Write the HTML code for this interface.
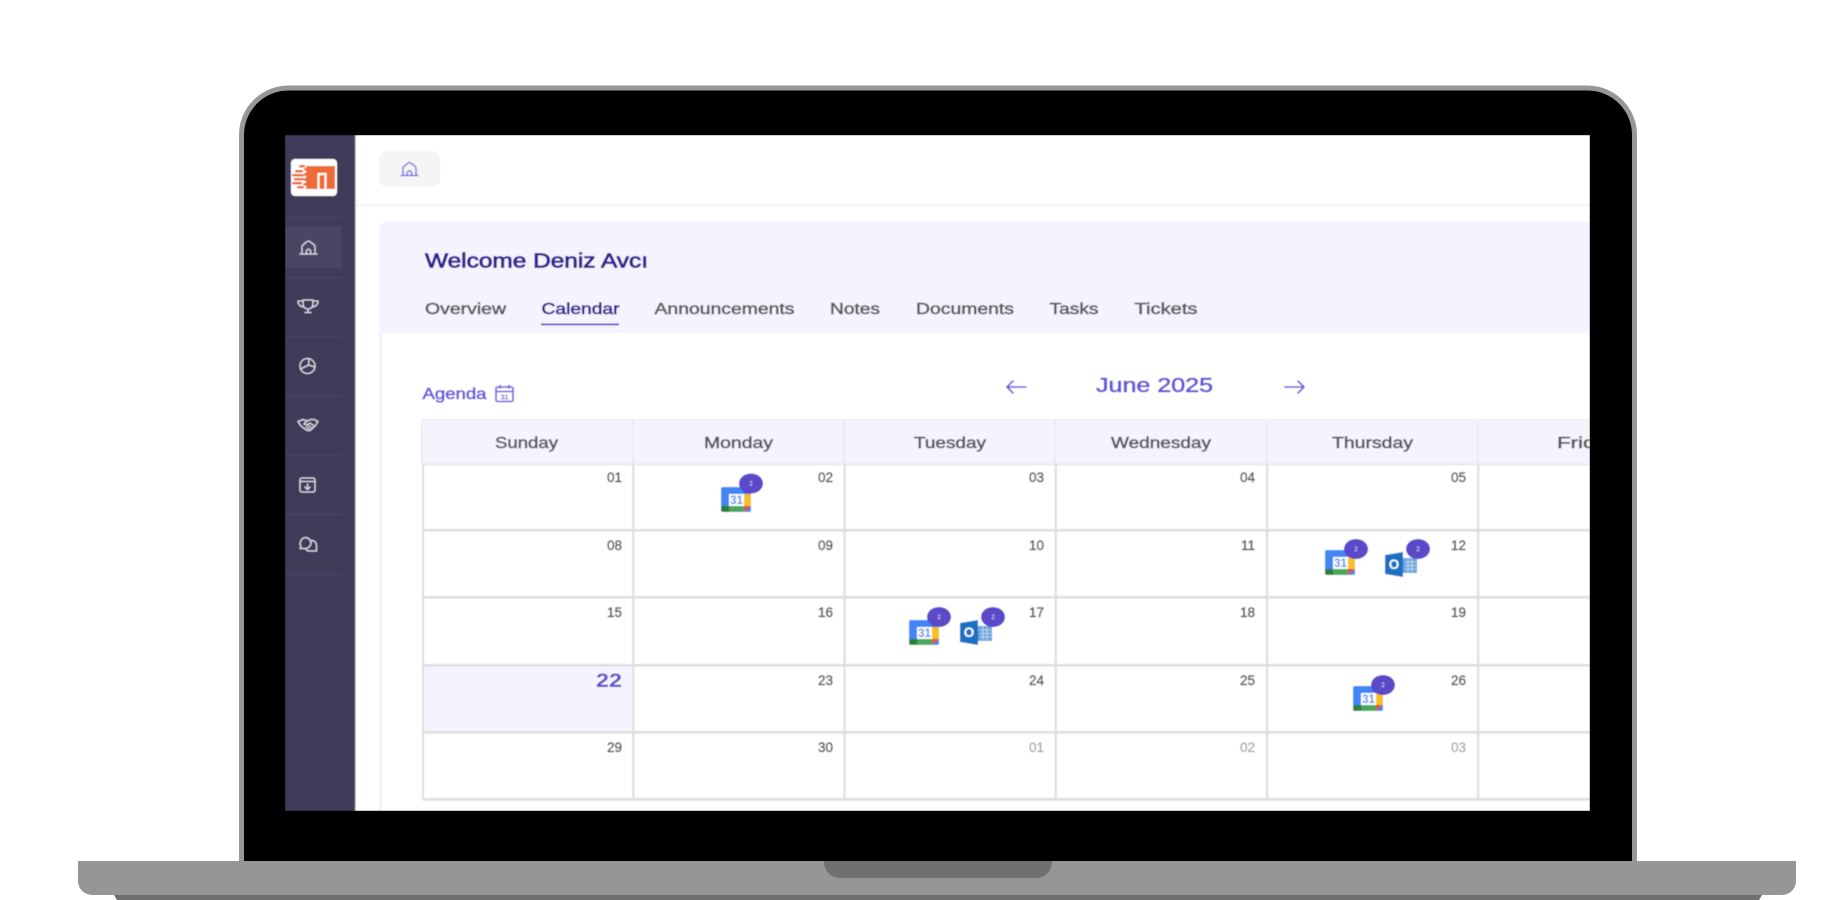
<!DOCTYPE html>
<html lang="en">
<head>
<meta charset="utf-8">
<title>Calendar</title>
<style>
html,body{margin:0;padding:0;background:#fff;width:1840px;height:900px;overflow:hidden}
svg{display:block}
text{font-family:"Liberation Sans",sans-serif}
</style>
</head>
<body>
<svg width="1840" height="900" viewBox="0 0 1840 900" xmlns="http://www.w3.org/2000/svg">
<defs>
<clipPath id="scr"><rect x="285" y="135" width="1305" height="676"/></clipPath>
<filter id="b" x="0" y="0" width="100%" height="100%"><feGaussianBlur stdDeviation="0.6"/></filter>
<g id="gc">
<rect x="0" y="0" width="30" height="25" rx="2" fill="#4285f4"/>
<rect x="23" y="0" width="7" height="7" fill="#2f73dc"/>
<rect x="23" y="7" width="7" height="12" fill="#f6bf26"/>
<rect x="8" y="19" width="15" height="6" fill="#4aa85e"/>
<path d="M0 19H8V25H2A2 2 0 0 1 0 23Z" fill="#2a7f3e"/>
<path d="M23 19H30L23 25Z" fill="#e2553f"/>
<rect x="8" y="7" width="15" height="12" fill="#fff"/>
</g>
<g id="ol">
<rect x="18" y="6" width="14" height="15" fill="#6ba4dc"/>
<path d="M20 10H31M20 13.5H31M20 17H31M23 7V20M27 7V20" stroke="#cfe2f4" stroke-width="0.8" fill="none"/>
<path d="M0 3L18 0V25L0 22Z" fill="#1f70c1"/>
</g>
</defs>

<!-- laptop -->
<path d="M241.5 870V135A47 47 0 0 1 288.5 88H1587.5A47 47 0 0 1 1634.5 135V870Z" fill="#000" stroke="#979797" stroke-width="5"/>
<rect x="0" y="861" width="1840" height="39" fill="#fff"/>
<path d="M78 861H1796V881A14 14 0 0 1 1782 895H92A14 14 0 0 1 78 881Z" fill="#969696"/>
<path d="M114 895H1762L1759 900H117Z" fill="#6f6f6f"/>
<path d="M824 861H1052V862A16 16 0 0 1 1036 878H840A16 16 0 0 1 824 862Z" fill="#707070"/>

<g clip-path="url(#scr)">
<g filter="url(#b)">
<rect x="285" y="135" width="1305" height="676" fill="#fff"/>

<!-- sidebar -->
<rect x="285" y="135" width="70" height="676" fill="#403a59"/>
<rect x="355" y="135" width="1" height="676" fill="#c9c8d2"/>
<rect x="291" y="159" width="46" height="37" rx="4" fill="#fff"/>
<rect x="306" y="166" width="29" height="23" fill="#ee6b39"/>
<path d="M318.5 189V174H325.5V189" fill="#ee6b39" stroke="#fff" stroke-width="2.2"/>
<g fill="#ee6b39">
<rect x="299" y="165" width="6" height="2.5" rx="1"/><rect x="304" y="168" width="6" height="2.5" rx="1"/>
<rect x="295" y="170" width="8" height="2.5" rx="1"/><rect x="292" y="174" width="12" height="2.5" rx="1"/>
<rect x="304" y="173" width="6" height="3" rx="1"/><rect x="294" y="178" width="10" height="2.5" rx="1"/>
<rect x="304" y="178" width="6" height="3" rx="1"/><rect x="292" y="182" width="10" height="2.5" rx="1"/>
<rect x="303" y="183" width="6" height="2.5" rx="1"/><rect x="297" y="186" width="7" height="2.5" rx="1"/>
</g>
<rect x="285" y="226" width="57" height="42" fill="#4a4463"/>
<g fill="#4d4672">
<rect x="285" y="217" width="57" height="1"/><rect x="285" y="277" width="57" height="1"/>
<rect x="285" y="336" width="57" height="1"/><rect x="285" y="395" width="57" height="1"/>
<rect x="285" y="455" width="57" height="1"/><rect x="285" y="514" width="57" height="1"/>
<rect x="285" y="574" width="57" height="1"/>
</g>
<g fill="none" stroke="#dddbe6" stroke-width="1.3" stroke-linecap="round" stroke-linejoin="round">
<g transform="translate(308.5 247.5)"><path d="M-8.5 6.5H8.5M-6.5 6.5V-1.5C-6.5 -2 -1 -6.5 0 -6.5C1 -6.5 6.5 -2 6.5 -1.5V6.5M-2.2 6.5V4A2.2 2.2 0 0 1 2.2 4V6.5"/></g>
<g transform="translate(308 306)"><path d="M-5 -6H5V-2A5 5 0 0 1 -5 -2ZM-5 -5H-10C-10 -1 -7 1 -4 1M5 -5H10C10 -1 7 1 4 1M0 3V6M-3 6.5H3"/></g>
<g transform="translate(307.5 366)"><circle r="7.5"/><path d="M-7 3L1 -1L1.5 -7.3M1 -1L7.3 1"/></g>
<g transform="translate(308 425)"><path d="M-10 -3.5L-5 -5.5L-1 -4L3 -5.5L6 -5.5L10 -3.5L7 1L2 5.5L-1 5.5L-7 1ZM-1 -4L-4 -1L-1 0L2 -2L6 1M-7 1L-3 4M-5 2.5L-1 5.5M-2 2L1.5 4.5M0 0.5L4 3"/></g>
<g transform="translate(307.5 485)"><rect x="-7.5" y="-7" width="15" height="14" rx="2"/><path d="M-7.5 -3.5H7.5M0 -1V4M-2.5 2L0 4.5L2.5 2"/></g>
<g transform="translate(308.5 544)"><path d="M-3 -6.5A5.8 5.8 0 0 1 2.5 -1.2A5.8 5.8 0 0 1 -3 4.5H-8.5L-7.5 2.5A6 6 0 0 1 -3 -6.5Z"/><path d="M3 -3.5A5 5 0 0 1 8 1.5V7H0A4.5 4.5 0 0 1 -3 4.5"/></g>
</g>

<!-- top bar -->
<rect x="379" y="151" width="61" height="36" rx="8" fill="#f5f5f5"/>
<g transform="translate(409.5 169)" fill="none" stroke="#6c60e0" stroke-width="1.3" stroke-linecap="round" stroke-linejoin="round"><path d="M-8.5 6.5H8.5M-6.5 6.5V-1.5C-6.5 -2 -1 -6.5 0 -6.5C1 -6.5 6.5 -2 6.5 -1.5V6.5M-2.2 6.5V4A2.2 2.2 0 0 1 2.2 4V6.5"/></g>
<rect x="356" y="204.5" width="1234" height="1.5" fill="#f0f0f0"/>

<!-- welcome panel -->
<path d="M387 221.5H1590V333H379V229.5A8 8 0 0 1 387 221.5Z" fill="#f5f3fd"/>
<rect x="379.5" y="333" width="2" height="478" fill="#eeeeef"/>
<text x="425" y="267.5" font-size="20.5" fill="#2f2490" stroke="#2f2490" stroke-width="0.85" textLength="223" lengthAdjust="spacingAndGlyphs">Welcome Deniz Avcı</text>
<g font-size="16" fill="#5a5a5e" stroke="#5a5a5e" stroke-width="0.55">
<text x="425" y="314" textLength="81" lengthAdjust="spacingAndGlyphs">Overview</text>
<text x="654.5" y="314" textLength="140" lengthAdjust="spacingAndGlyphs">Announcements</text>
<text x="830" y="314" textLength="50" lengthAdjust="spacingAndGlyphs">Notes</text>
<text x="916" y="314" textLength="98" lengthAdjust="spacingAndGlyphs">Documents</text>
<text x="1049.5" y="314" textLength="49" lengthAdjust="spacingAndGlyphs">Tasks</text>
<text x="1134.5" y="314" textLength="63" lengthAdjust="spacingAndGlyphs">Tickets</text>
</g>
<text x="541.5" y="314" font-size="16" fill="#2f2490" stroke="#2f2490" stroke-width="0.6" textLength="78" lengthAdjust="spacingAndGlyphs">Calendar</text>
<rect x="541" y="323.5" width="78" height="1.8" fill="#5b4fc9"/>

<!-- agenda + month nav -->
<text x="422.5" y="399" font-size="16" fill="#6659dc" stroke="#6659dc" stroke-width="0.6" textLength="64" lengthAdjust="spacingAndGlyphs">Agenda</text>
<g fill="none" stroke="#6659dc" stroke-width="1.6" stroke-linecap="round">
<rect x="496" y="387" width="17" height="14.5" rx="1.5"/><path d="M496 391.5H513M500 385.5V388M509 385.5V388"/>
</g>
<text x="504.5" y="399.5" font-size="7" font-weight="bold" text-anchor="middle" fill="#6659dc">31</text>
<text x="1096" y="392" font-size="20" fill="#6154d8" stroke="#6154d8" stroke-width="0.6" textLength="117" lengthAdjust="spacingAndGlyphs">June 2025</text>
<g fill="none" stroke="#6154d8" stroke-width="1.6" stroke-linecap="round" stroke-linejoin="round">
<path d="M1007 387H1026M1013 381L1007 387L1013 393"/>
<path d="M1285 387H1304M1298 381L1304 387L1298 393"/>
</g>

<!-- table header -->
<rect x="421" y="420" width="1169" height="44" fill="#f5f4fd"/>
<path d="M421 420H1590" stroke="#ecebf4" stroke-width="1.5"/>
<g fill="#e9e8f2">
<rect x="421" y="420" width="1.5" height="44"/><rect x="632" y="420" width="1.6" height="44"/>
<rect x="843.5" y="420" width="1.6" height="44"/><rect x="1054.5" y="420" width="1.6" height="44"/>
<rect x="1266" y="420" width="1.6" height="44"/><rect x="1477" y="420" width="1.6" height="44"/>
</g>
<g font-size="15.5" fill="#58585c" stroke="#58585c" stroke-width="0.5">
<text x="495" y="448" textLength="63" lengthAdjust="spacingAndGlyphs">Sunday</text>
<text x="704" y="448" textLength="69" lengthAdjust="spacingAndGlyphs">Monday</text>
<text x="914" y="448" textLength="72" lengthAdjust="spacingAndGlyphs">Tuesday</text>
<text x="1111" y="448" textLength="100" lengthAdjust="spacingAndGlyphs">Wednesday</text>
<text x="1332" y="448" textLength="81" lengthAdjust="spacingAndGlyphs">Thursday</text>
<text x="1557" y="448" textLength="62" lengthAdjust="spacingAndGlyphs">Friday</text>
</g>

<!-- today -->
<rect x="423" y="665" width="210" height="67" fill="#f5f4fd"/>

<!-- grid -->
<g fill="#dedede">
<rect x="422" y="463.5" width="1168" height="1.8" fill="#e6e6ea"/>
<rect x="422" y="529" width="1168" height="2.6"/><rect x="422" y="596" width="1168" height="2.6"/>
<rect x="422" y="664" width="1168" height="2.6"/><rect x="422" y="731" width="1168" height="2.6"/>
<rect x="422" y="798" width="1168" height="2.6"/>
<rect x="422" y="464" width="2" height="336"/><rect x="632.2" y="464" width="2.2" height="336"/>
<rect x="843.5" y="464" width="2.2" height="336"/><rect x="1054.7" y="464" width="2.2" height="336"/>
<rect x="1266" y="464" width="2.2" height="336"/><rect x="1477" y="464" width="2.2" height="336"/>
</g>

<!-- dates -->
<g font-size="13.5" fill="#5c5c60" stroke="#5c5c60" stroke-width="0.45" text-anchor="end">
<text x="622" y="482">01</text><text x="833" y="482">02</text><text x="1044" y="482">03</text><text x="1255" y="482">04</text><text x="1466" y="482">05</text>
<text x="622" y="549.8">08</text><text x="833" y="549.8">09</text><text x="1044" y="549.8">10</text><text x="1255" y="549.8">11</text><text x="1466" y="549.8">12</text>
<text x="622" y="616.8">15</text><text x="833" y="616.8">16</text><text x="1044" y="616.8">17</text><text x="1255" y="616.8">18</text><text x="1466" y="616.8">19</text>
<text x="833" y="684.8">23</text><text x="1044" y="684.8">24</text><text x="1255" y="684.8">25</text><text x="1466" y="684.8">26</text>
<text x="622" y="751.8">29</text><text x="833" y="751.8">30</text>
</g>
<g font-size="13.5" fill="#a8a8ac" stroke="#a8a8ac" stroke-width="0.3" text-anchor="end">
<text x="1044" y="751.8">01</text><text x="1255" y="751.8">02</text><text x="1466" y="751.8">03</text>
</g>
<text x="622" y="687" font-size="19" font-weight="bold" text-anchor="end" fill="#5b4fc9" textLength="26" lengthAdjust="spacingAndGlyphs">22</text>

<!-- google calendar icons -->
<g transform="translate(721 487)"><use href="#gc"/><text x="15.5" y="17" font-size="11.5" font-weight="bold" text-anchor="middle" fill="#5a8ff0">31</text><ellipse cx="30" cy="-3.5" rx="12" ry="10" fill="#5a49c8"/><text x="30" y="-1.5" font-size="6" text-anchor="middle" fill="#e6e3f8">2</text></g>
<g transform="translate(1325 550)"><use href="#gc"/><text x="15.5" y="17" font-size="11.5" font-weight="bold" text-anchor="middle" fill="#5a8ff0">31</text><ellipse cx="31" cy="-1" rx="12" ry="10" fill="#5a49c8"/><text x="31" y="1" font-size="6" text-anchor="middle" fill="#e6e3f8">2</text></g>
<g transform="translate(909 620)"><use href="#gc"/><text x="15.5" y="17" font-size="11.5" font-weight="bold" text-anchor="middle" fill="#5a8ff0">31</text><ellipse cx="30" cy="-3" rx="12" ry="10" fill="#5a49c8"/><text x="30" y="-1" font-size="6" text-anchor="middle" fill="#e6e3f8">2</text></g>
<g transform="translate(1353 686)"><use href="#gc"/><text x="15.5" y="17" font-size="11.5" font-weight="bold" text-anchor="middle" fill="#5a8ff0">31</text><ellipse cx="30" cy="-1" rx="12" ry="10" fill="#5a49c8"/><text x="30" y="1" font-size="6" text-anchor="middle" fill="#e6e3f8">2</text></g>

<!-- outlook icons -->
<g transform="translate(1385 552)"><use href="#ol"/><text x="9" y="17" font-size="13.5" font-weight="bold" text-anchor="middle" fill="#fff">O</text><ellipse cx="33" cy="-3" rx="12" ry="10" fill="#5a49c8"/><text x="33" y="-1" font-size="6" text-anchor="middle" fill="#e6e3f8">2</text></g>
<g transform="translate(960 620)"><use href="#ol"/><text x="9" y="17" font-size="13.5" font-weight="bold" text-anchor="middle" fill="#fff">O</text><ellipse cx="33" cy="-3" rx="12" ry="10" fill="#5a49c8"/><text x="33" y="-1" font-size="6" text-anchor="middle" fill="#e6e3f8">2</text></g>
</g>
</g>
</svg>
</body>
</html>
